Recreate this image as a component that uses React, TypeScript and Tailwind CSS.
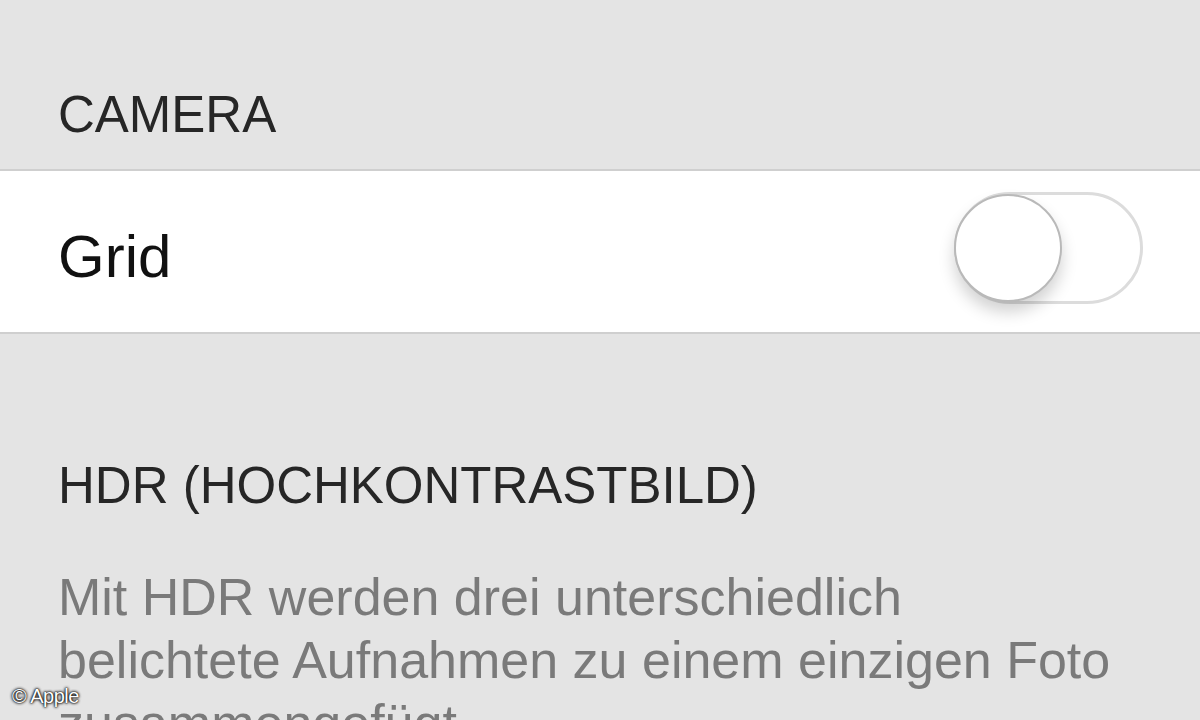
import { useState } from "react";

function Toggle({ on, onChange }: { on: boolean; onChange: (v: boolean) => void }) {
  return (
    <button
      type="button"
      role="switch"
      aria-checked={on}
      onClick={() => onChange(!on)}
      className={
        "relative h-[112px] w-[189px] shrink-0 rounded-full border-[3px] " +
        (on ? "border-[#4cd964] bg-[#4cd964]" : "border-[#dcdcdc] bg-white")
      }
    >
      <span
        className={
          "absolute top-[-1px] h-[108px] w-[108px] rounded-full border-2 border-[#b9b9b9] bg-white shadow-[0_10px_16px_rgba(0,0,0,0.18)] " +
          (on ? "right-[-3px]" : "left-[-3px]")
        }
      />
    </button>
  );
}

export default function App() {
  const [grid, setGrid] = useState(false);

  return (
    <div
      className="relative h-[720px] w-[1200px] overflow-hidden bg-[#e4e4e4]"
      style={{ fontFamily: '"Liberation Sans", Arial, sans-serif' }}
    >
      <div className="px-[58px] pb-[23px] pt-[83px]">
        <h2 className="text-[51px] leading-[63px] text-[#262626]">CAMERA</h2>
      </div>

      <div className="flex h-[165px] items-center justify-between border-y-2 border-[#cfcfcf] bg-white pl-[58px] pr-[57px]">
        <span className="mt-[10px] text-[60px] leading-[60px] text-[#111]">Grid</span>
        <div className="-mt-[3px]">
          <Toggle on={grid} onChange={setGrid} />
        </div>
      </div>

      <div className="px-[58px] pt-[120px]">
        <h2 className="text-[51px] leading-[63px] text-[#262626]">HDR (HOCHKONTRASTBILD)</h2>
        <p className="mt-[49px] w-[1070px] text-[52px] leading-[63px] text-[#7a7a7a]">
          Mit HDR werden drei unterschiedlich belichtete Aufnahmen zu einem einzigen Foto
          zusammengefügt.
        </p>
      </div>

      <span className="absolute left-[12px] top-[684px] text-[20px] leading-[24px] tracking-[-0.5px] text-white [text-shadow:0_0_3px_#000,0_0_3px_#000,0_0_1px_#000]">
        © Apple
      </span>
    </div>
  );
}
